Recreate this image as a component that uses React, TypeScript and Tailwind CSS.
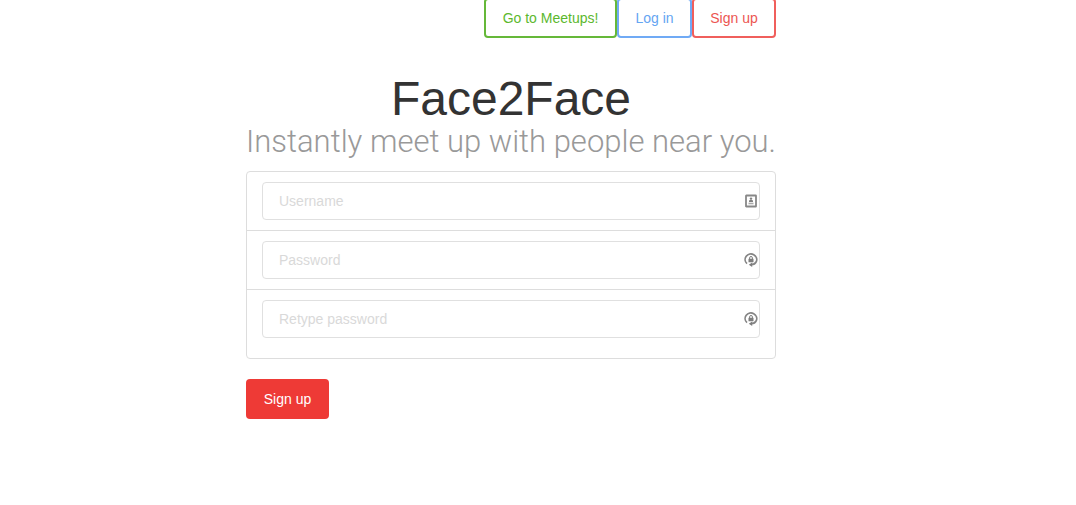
import React from "react";

function ContactIcon() {
  return (
    <svg viewBox="0 0 14 14" className="h-3.5 w-3.5" aria-hidden="true">
      <rect x="2" y="1.5" width="10" height="11" rx="0.3" fill="#fff" stroke="#888" strokeWidth="1.8" />
      <circle cx="7" cy="4.6" r="1.2" fill="#808080" />
      <path d="M5 8V7.2C5 6.2 6 5.8 7 5.8s2 .4 2 1.400V8z" fill="#808080" />
      <path d="M4.5 9.5h5" stroke="#aaa" strokeWidth="1.6" />
    </svg>
  );
}

function LockIcon() {
  return (
    <svg viewBox="0 0 14 14" className="h-3.5 w-3.5" aria-hidden="true">
      <path d="M3 10.700A5.800 5.600 0 1 1 12.300 8.700C11.400 10.800 9.700 11.700 7.300 11.700" fill="none" stroke="#858585" strokeWidth="1.7" />
      <path d="M8.200 9.600v4.400L4.800 11.800z" fill="#7d7d7d" />
      <rect x="4.500" y="5.800" width="5" height="3.400" rx="0.3" fill="#7d7d7d" />
      <path d="M5.600 6V4.900a1.400 1.400 0 0 1 2.800 0V6" fill="none" stroke="#7d7d7d" />
    </svg>
  );
}

const fields = [
  { id: "username", label: "Username", type: "text", Icon: ContactIcon },
  { id: "password", label: "Password", type: "password", Icon: LockIcon },
  { id: "retype", label: "Retype password", type: "password", Icon: LockIcon },
];

const navLink = "flex h-10 items-center justify-center rounded border-2 bg-white";

export default function App() {
  return (
    <div className="bg-white pr-[54px] font-['Liberation_Sans',Arial,sans-serif] text-sm text-[#333]">
      <div className="mx-auto flow-root max-w-[530px]">
        <nav className="-mt-0.5 flex justify-end">
          <a href="#meetups" className={`${navLink} w-[133px] border-[#65b839] text-[#5cb82e]`}>Go to Meetups!</a>
          <a href="#login" className={`${navLink} w-[75px] border-[#70aaf5] text-[#65a5f2]`}>Log in</a>
          <a href="#signup" className={`${navLink} w-[84px] border-[#f05f5c] text-[#ec5652]`}>Sign up</a>
        </nav>

        <header className="mt-9 text-center whitespace-nowrap">
          <h1 className="text-5xl leading-[50px]">Face2Face</h1>
          <p className="font-[Roboto,sans-serif] text-[31px] leading-9 font-light text-[#999]">
            Instantly meet up with people near you.
          </p>
        </header>

        <form className="mt-[11px]" onSubmit={(e) => e.preventDefault()}>
          <div className="divide-y divide-[#ddd] rounded border border-[#ddd] pb-2.5">
            {fields.map(({ id, label, type, Icon }) => (
              <div key={id} className="px-[15px] py-2.5">
                <label htmlFor={id} className="flex h-[38px] items-center rounded border border-[#e0e0e0] pr-px">
                  <input
                    id={id}
                    type={type}
                    aria-label={label}
                    placeholder={label}
                    className="h-full min-w-0 flex-1 bg-transparent pl-4 outline-none placeholder:text-[#d9d9d9]"
                  />
                  <Icon />
                </label>
              </div>
            ))}
          </div>
          <button type="submit" className="mt-5 h-10 w-[83px] rounded bg-[#ee3a36] text-white">Sign up</button>
        </form>
      </div>
    </div>
  );
}
